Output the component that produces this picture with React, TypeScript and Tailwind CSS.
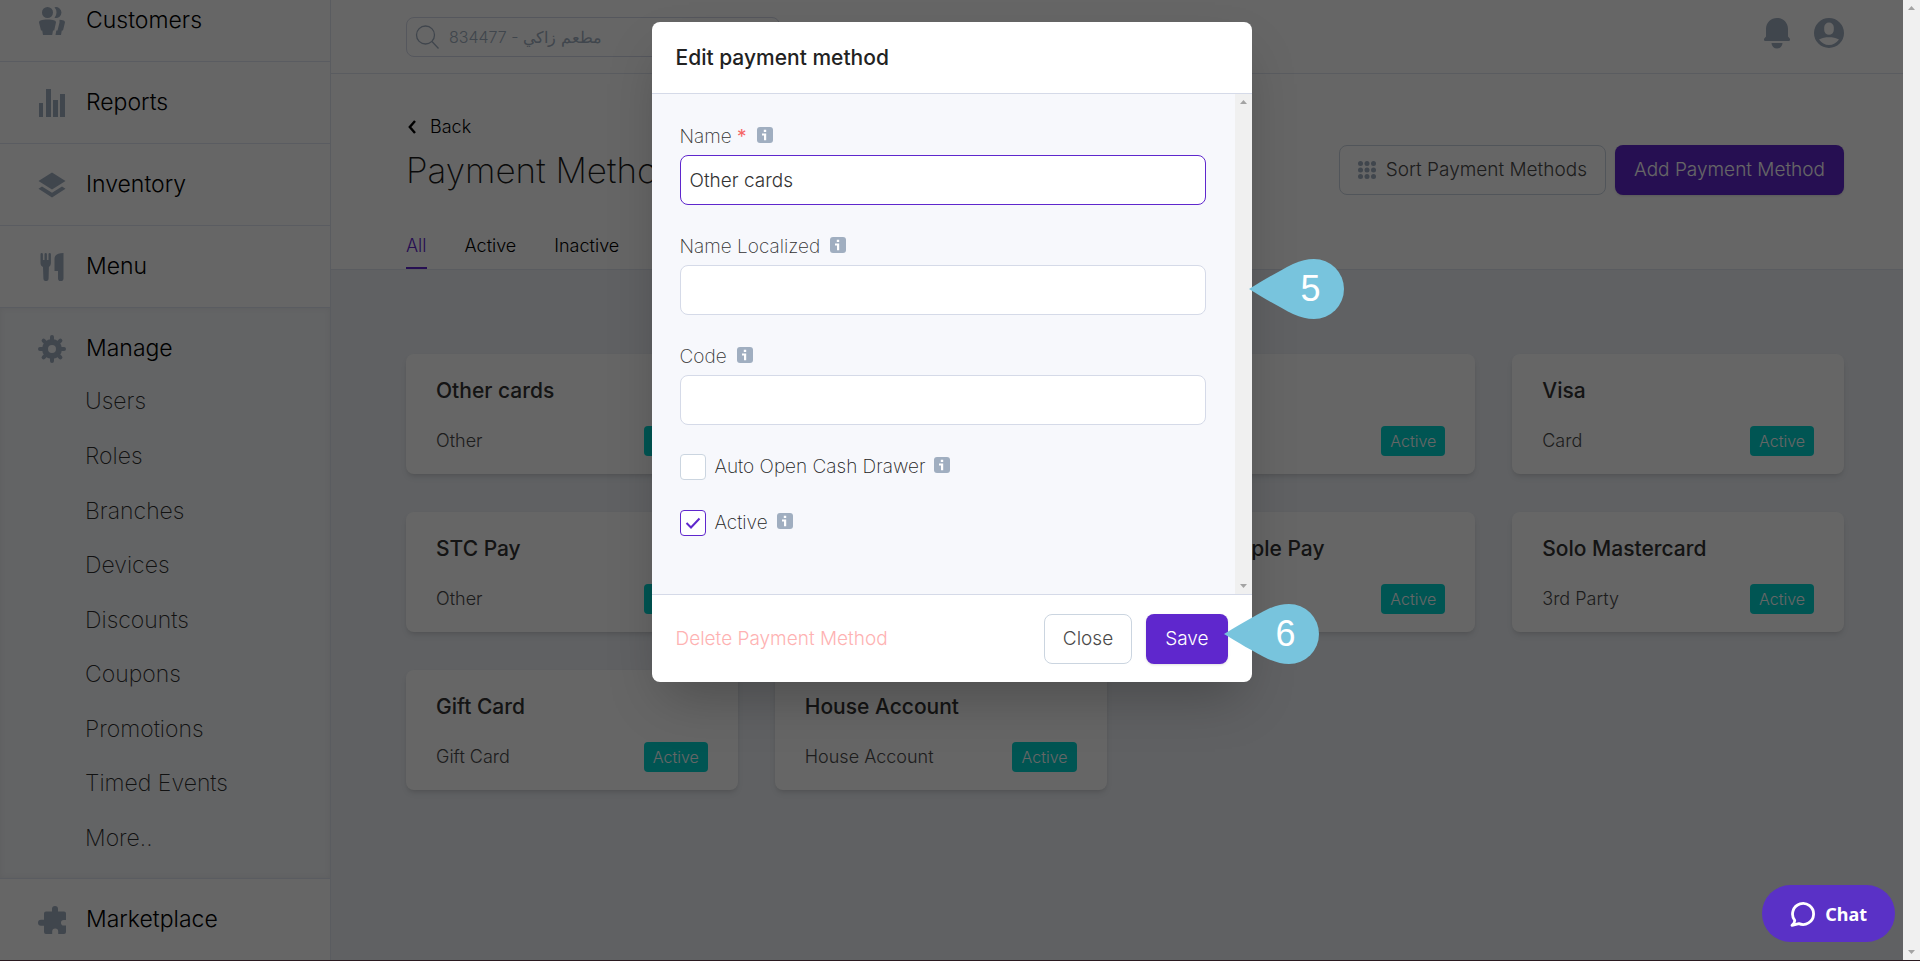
import type { ReactNode } from "react";

interface NavItem {
  label: string;
  icon: ReactNode;
}

interface Method {
  name: string;
  type: string;
}

function CustomersIcon() {
  return (
    <svg width="26" height="28" viewBox="0 0 26 28" fill="currentColor">
      <circle cx="8.5" cy="5.5" r="5.5" />
      <path d="M15.500 0.300a5.500 5.500 0 1 1 0 10.600a8 8 0 0 0 0-10.600z" />
      <path d="M1.500 13.500c4-1.300 10-1.300 14 0c1.200.4 1.600 1.200 1.400 2.300l-1.700 7.700h-1.200l-.8 4.500H4l-.8-4.500H2L.1 15.800c-.2-1.100.2-1.900 1.400-2.300z" />
      <path d="M20.500 12.700c1.500.1 2.900.4 4.100.8 1 .4 1.500 1.200 1.300 2.300L24 23.500h-1.200l-.8 4.500h-5.500l.8-4.500h1.200l2-8z" />
    </svg>
  );
}

function ReportsIcon() {
  return (
    <svg width="26" height="28" viewBox="0 0 26 28" fill="currentColor">
      <rect x="0" y="14" width="4" height="14" />
      <rect x="7" y="0" width="5" height="28" />
      <rect x="14" y="11" width="5" height="17" />
      <rect x="21" y="5" width="5" height="23" />
    </svg>
  );
}

function InventoryIcon() {
  return (
    <svg width="28" height="26" viewBox="0 0 28 26" fill="currentColor">
      <path d="M14 0.500 27.500 9 14 17.500 0.500 9z" />
      <path d="M4 14.500 14 20.800l10-6.300 3.500 2.200L14 25.500.5 16.700z" />
    </svg>
  );
}

function MenuIcon() {
  return (
    <svg width="26" height="28" viewBox="0 0 26 28" fill="currentColor">
      <path d="M1.500 1.200a1.200 1.200 0 0 1 2.400 0V7h1.600V1.200a1.200 1.200 0 0 1 2.400 0V7h1.600V1.200a1.200 1.200 0 0 1 2.400 0V10c0 2-.9 3.300-2 4l-.3 11.500a2.500 2.500 0 0 1-5.200 0L4 14c-1.600-.7-2.500-2-2.500-4z" />
      <path d="M24.500 0.500v25a2.500 2.500 0 0 1-5.500 0V18h-3.500V6c0-4 3-6 9-6z" />
    </svg>
  );
}

function GearIcon() {
  return (
    <svg width="28" height="28" viewBox="0 0 28 28" fill="none" stroke="currentColor" strokeLinecap="round">
      <circle cx="14" cy="14" r="7" strokeWidth="6" />
      <g strokeWidth="4">
        <path d="M14 2V5M14 23v3M2 14H5M23 14h3M5.600 5.600l2.200 2.200M20.200 20.200l2.200 2.200M5.600 22.400l2.200-2.200M20.200 7.800l2.200-2.200" />
      </g>
    </svg>
  );
}

function PuzzleIcon() {
  return (
    <svg width="28" height="28" viewBox="0 0 28 28" fill="currentColor">
      <path d="M8 5.500h6V3a3 3 0 0 1 6 0v2.500h6a2 2 0 0 1 2 2V14h-2.200a2.800 2.800 0 0 0 0 5.600H28V26a2 2 0 0 1-2 2h-5.800v-2.500a2.800 2.800 0 0 0-6 0V28H8a2 2 0 0 1-2-2v-6.200H3a3 3 0 0 1 0-6h3V7.500a2 2 0 0 1 2-2z" />
    </svg>
  );
}

function BellIcon() {
  return (
    <svg width="26" height="32" viewBox="0 0 26 32" fill="currentColor">
      <path d="M13 1c6 0 11 4.500 11 11v7.500l1.700 2c.7 1 .2 2.500-1.200 2.500H1.500c-1.400 0-1.900-1.500-1.200-2.500l1.700-2V12C2 5.500 7 1 13 1z" />
      <path d="M7.500 26h11a5.500 5.500 0 0 1-11 0z" />
    </svg>
  );
}

function UserIcon() {
  return (
    <svg width="30" height="30" viewBox="0 0 30 30" fill="currentColor">
      <path
        fillRule="evenodd"
        d="M15 0a15 15 0 1 1 0 30a15 15 0 0 1 0-30zM15 4.500a4.800 4.800 0 0 0-4.800 4.800v2.700a4.800 4.800 0 0 0 9.600 0V9.300a4.800 4.800 0 0 0-4.800-4.800zM5 21.500c2.500 3.500 6 5.500 10 5.500s7.500-2 10-5.500c-3-1.800-6.500-2.300-10-2.300s-7 .5-10 2.300z"
      />
    </svg>
  );
}

function InfoIcon() {
  return (
    <svg width="16" height="16" viewBox="0 0 16 16" className="mb-1 shrink-0">
      <rect width="16" height="16" rx="3" fill="#a0aec0" />
      <path d="M6.800 2.800h2.400v2.200H6.800zM5 6.500h4.200V13.200H7V8.500H5z" fill="#fff" />
    </svg>
  );
}

function Scrollbar() {
  return (
    <div className="flex w-[17px] shrink-0 flex-col items-center justify-between bg-[#f0f0f0] py-[6px]">
      <svg width="7" height="4" viewBox="0 0 7 4" fill="#a3a3a3">
        <path d="M3.500 0 7 4H0z" />
      </svg>
      <svg width="7" height="4" viewBox="0 0 7 4" fill="#a3a3a3">
        <path d="M0 0h7L3.500 4z" />
      </svg>
    </div>
  );
}

function Callout({ step }: { step: number }) {
  return (
    <div className="relative h-[60px] w-[95px]">
      <svg width="95" height="60" viewBox="0 0 95 60" fill="#78c4dd" className="block">
        <path d="M0 30C13 22 30 12 44 5C52 1.500 58 0 65 0a30 30 0 0 1 0 60C58 60 52 58.500 44 55C30 48 13 38 0 30z" />
      </svg>
      <span className="absolute inset-y-0 right-0 flex w-[66px] items-center justify-center font-['Liberation_Sans',sans-serif] text-4xl text-white">
        {step}
      </span>
    </div>
  );
}

const topItems: NavItem[] = [
  { label: "Customers", icon: <CustomersIcon /> },
  { label: "Reports", icon: <ReportsIcon /> },
  { label: "Inventory", icon: <InventoryIcon /> },
  { label: "Menu", icon: <MenuIcon /> },
];

const manageItems = ["Users", "Roles", "Branches", "Devices", "Discounts", "Coupons", "Promotions", "Timed Events", "More.."];

const tabs = ["All", "Active", "Inactive"];

const methods: Method[] = [
  { name: "Other cards", type: "Other" },
  { name: "Cash", type: "Cash" },
  { name: "Mada", type: "Card" },
  { name: "Visa", type: "Card" },
  { name: "STC Pay", type: "Other" },
  { name: "Mastercard", type: "Card" },
  { name: "Solo Apple Pay", type: "3rd Party" },
  { name: "Solo Mastercard", type: "3rd Party" },
  { name: "Gift Card", type: "Gift Card" },
  { name: "House Account", type: "House Account" },
];

function NavRow({ item }: { item: NavItem }) {
  return (
    <a href="#" className="flex h-[81px] items-center gap-5 pl-[38px] text-[23px] font-light text-black">
      <span className="flex w-7 justify-center text-[#a0aec0]">{item.icon}</span>
      {item.label}
    </a>
  );
}

function Sidebar() {
  return (
    <aside className="w-[331px] shrink-0 overflow-hidden border-r border-[#e2e6f0] bg-white">
      <nav className="-mt-5">
        {topItems.map((item) => (
          <div key={item.label} className="border-b border-[#e2e6f2]">
            <NavRow item={item} />
          </div>
        ))}
        <div className="border-b border-[#e2e6f2] bg-[#f7f9fc] pb-3 shadow-[inset_0_0_6px_rgba(0,0,0,0.06)]">
          <NavRow item={{ label: "Manage", icon: <GearIcon /> }} />
          <ul className="-mt-3.5 flex h-[491px] flex-col text-[23px] font-extralight text-[#2d2d2d]">
            {manageItems.map((label) => (
              <li key={label} className="flex flex-1 items-center pl-[85px]">
                <a href="#">{label}</a>
              </li>
            ))}
          </ul>
        </div>
        <NavRow item={{ label: "Marketplace", icon: <PuzzleIcon /> }} />
      </nav>
    </aside>
  );
}

function TopBar() {
  return (
    <header className="flex h-[74px] items-center justify-between border-b border-[#e2e6f0] bg-white pr-[59px] pl-[75px]">
      <label className="flex h-10 w-[374px] items-center gap-2.5 rounded-lg border border-[#d5dae8] px-2 text-[#a0aec0]">
        <svg width="24" height="24" viewBox="0 0 24 24" fill="none" stroke="currentColor" strokeWidth="1.300">
          <circle cx="10.500" cy="10" r="9" />
          <path d="M17 16.500 23.500 23.500" />
        </svg>
        <input
          aria-label="Search"
          placeholder="834477 - مطعم زاكي"
          className="min-w-0 flex-1 bg-transparent text-base font-light outline-none placeholder:text-[#a0aec0]"
        />
      </label>
      <div className="-mt-2 flex items-center gap-6 text-[#a0aec0]">
        <button aria-label="Notifications">
          <BellIcon />
        </button>
        <button aria-label="Account">
          <UserIcon />
        </button>
      </div>
    </header>
  );
}

function PageHeader() {
  return (
    <div className="border-b border-[#e2e6f0] bg-white pt-10 pr-[59px] pl-[75px]">
      <a href="#" className="flex items-center gap-3.5 pl-0.5 leading-[26px] font-light text-black">
        <svg width="8" height="14" viewBox="0 0 8 14" fill="none" stroke="currentColor" strokeWidth="2.400">
          <path d="M7 1 1.800 7 7 13" />
        </svg>
        Back
      </a>
      <div className="flex items-center justify-between">
        <h1 className="text-[35px] leading-[60px] font-extralight text-[#1a1a1a]">Payment Methods</h1>
        <div className="flex gap-[9px] text-[19px]">
          <button className="flex h-[50px] items-center gap-2.5 rounded-lg border border-[#cbd5e0] px-[18px] font-light text-[#4a4a4a]">
            <svg width="18" height="18" viewBox="0 0 18 18" fill="#a0aec0">
              {[2.5, 9, 15.5].map((y) => [2.5, 9, 15.5].map((x) => <circle key={`${x}-${y}`} cx={x} cy={y} r="2.500" />))}
            </svg>
            Sort Payment Methods
          </button>
          <button className="h-[50px] rounded-lg bg-[#5f27cd] px-[19px] font-light text-white shadow">Add Payment Method</button>
        </div>
      </div>
      <div className="mt-[30px] flex gap-[38px]">
        {tabs.map((tab, i) => (
          <button
            key={tab}
            className={
              i === 0
                ? "h-[39px] border-b-2 border-[#5f27cd] pb-1.5 font-light text-[#5f27cd]"
                : "h-[39px] border-b-2 border-transparent pb-1.5 font-light text-black"
            }
          >
            {tab}
          </button>
        ))}
      </div>
    </div>
  );
}

function MethodCard({ method }: { method: Method }) {
  return (
    <div className="flex h-[120px] flex-col justify-between rounded-lg bg-white px-[30px] pt-[22px] pb-[18px] shadow-md">
      <h2 className="text-[21px] leading-[30px] font-medium text-[#333]">{method.name}</h2>
      <div className="flex items-center justify-between">
        <span className="font-light text-[#4a4a4a]">{method.type}</span>
        <span className="flex h-[30px] items-center rounded bg-[#00d4d0] px-[9px] text-base font-light text-white">Active</span>
      </div>
    </div>
  );
}

function Field({ id, label, value, required }: { id: string; label: string; value?: string; required?: boolean }) {
  return (
    <div>
      <div className="mb-1 flex items-center gap-2.5">
        <label htmlFor={id} className="leading-7 text-[19px] font-extralight text-[#333]">
          {label}
          {required && <span className="font-normal text-[#f56565]"> *</span>}
        </label>
        <InfoIcon />
      </div>
      <input
        id={id}
        defaultValue={value}
        className={
          required
            ? "block h-[50px] w-full rounded-lg border border-[#5f27cd] bg-white px-[9px] text-[19px] font-light text-[#333] outline-none"
            : "block h-[50px] w-full rounded-lg border border-[#d5dae8] bg-white px-[9px] text-[19px] font-light text-[#333] outline-none"
        }
      />
    </div>
  );
}

function Check({ id, label, checked }: { id: string; label: string; checked?: boolean }) {
  return (
    <div className="flex h-[26px] items-center gap-[9px]">
      <span className="grid h-[26px] w-[26px]">
        <input
          id={id}
          type="checkbox"
          defaultChecked={checked}
          className="peer col-start-1 row-start-1 appearance-none rounded border border-[#cbd5e0] bg-white checked:border-[#5f27cd]"
        />
        <svg
          viewBox="0 0 26 26"
          fill="none"
          stroke="#5f27cd"
          strokeWidth="2"
          className="pointer-events-none col-start-1 row-start-1 hidden peer-checked:block"
        >
          <path d="M6.500 13 11 17.500 19.500 8.500" />
        </svg>
      </span>
      <label htmlFor={id} className="text-[19px] font-extralight text-[#222]">
        {label}
      </label>
      <InfoIcon />
    </div>
  );
}

function EditModal() {
  return (
    <div role="dialog" aria-labelledby="modal-title" className="relative mt-[22px] w-[600px] rounded-lg bg-white shadow-2xl">
      <h2 id="modal-title" className="px-6 pt-[21px] pb-5 text-[21px] leading-[30px] font-medium text-[#222]">
        Edit payment method
      </h2>
      <div className="flex border-y border-[#d5dae8] bg-[#f7f8fc]">
        <div className="flex-1 pt-[29px] pr-[29px] pb-[58px] pl-7">
          <div className="flex flex-col gap-7">
            <Field id="name" label="Name" value="Other cards" required />
            <Field id="name-localized" label="Name Localized" />
            <Field id="code" label="Code" />
          </div>
          <div className="mt-[29px] flex flex-col gap-[30px]">
            <Check id="drawer" label="Auto Open Cash Drawer" />
            <Check id="active" label="Active" checked />
          </div>
        </div>
        <Scrollbar />
      </div>
      <div className="flex items-center justify-between px-6 pt-[19px] pb-[18px] text-[19px] font-light">
        <button className="text-[#feb2b2]">Delete Payment Method</button>
        <div className="flex gap-3.5">
          <button className="h-[50px] rounded-lg border border-[#cbd5e0] px-[18px] text-[#4a4a4a]">Close</button>
          <div className="relative">
            <button className="h-[50px] rounded-lg bg-[#5f27cd] px-[19px] text-white shadow">Save</button>
            <div className="absolute -top-2.5 left-full -ml-1">
              <Callout step={6} />
            </div>
          </div>
        </div>
      </div>
      <div className="absolute top-[237px] left-full -ml-[3px]">
        <Callout step={5} />
      </div>
    </div>
  );
}

export default function App() {
  return (
    <div className="flex h-screen overflow-hidden border-b border-[#2a1a20] font-[Inter,sans-serif] text-lg">
      <div className="relative flex min-w-0 flex-1">
        <Sidebar />
        <main className="min-w-0 flex-1 bg-[#eff2f7]">
          <TopBar />
          <PageHeader />
          <div className="grid grid-cols-4 gap-x-[37px] gap-y-[38px] pt-[84px] pr-[59px] pl-[75px]">
            {methods.map((m) => (
              <MethodCard key={m.name} method={m} />
            ))}
          </div>
        </main>
        <div className="absolute inset-0 flex items-start justify-center bg-black/60">
          <EditModal />
        </div>
        <button className="absolute right-2 bottom-[18px] flex h-[57px] items-center gap-2.5 rounded-full bg-[#5a31c6] px-7 font-['Noto_Sans',sans-serif] font-bold text-white">
          <svg width="25" height="26" viewBox="0 0 25 26" fill="none" stroke="currentColor" strokeWidth="2.800" strokeLinejoin="round">
            <path d="M4.700 19.300a10.500 10.500 0 1 1 4.200 3.300L2 24.300c1.700-1.500 2.900-3.200 2.700-5z" />
          </svg>
          Chat
        </button>
      </div>
      <Scrollbar />
    </div>
  );
}
